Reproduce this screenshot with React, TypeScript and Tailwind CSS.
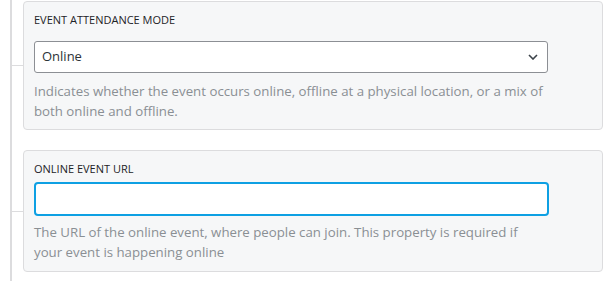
export default function App() {
  return (
    <div className="w-[616px] h-[281px] overflow-hidden bg-white pl-[10px] font-['Open_Sans',sans-serif]">
      <div className="h-full border-l-2 border-[#dcdcde] pt-[1px] flex flex-col gap-[20px]">
        <div className="flex items-center">
          <div className="w-[11px] h-px bg-[#dcdcde]" />
          <section className="w-[580px] rounded-[4px] border border-[#dcdcde] bg-[#f6f7f8] px-[10px] pt-[10px] pb-[8px]">
            <div className="max-w-[514px]">
              <label className="block text-[11px] leading-[16px] font-medium uppercase text-[#1d2327]">
                Event attendance mode
              </label>
              <div className="mt-[13px] flex h-[32px] items-center justify-between rounded-[3px] border border-[#8c8f94] bg-white pl-[7px] pr-[9px] text-[13px] text-[#2c3338]">
                <span>Online</span>
                <svg width="10" height="6" viewBox="0 0 10 6" fill="none">
                  <path d="M1 1l4 4 4-4" stroke="#3c434a" strokeWidth="1.6" />
                </svg>
              </div>
              <p className="mt-[8px] text-[13.25px] leading-[20px] text-[#8a8f94]">
                Indicates whether the event occurs online, offline at a physical location, or a mix of both online and offline.
              </p>
            </div>
          </section>
        </div>
        <div className="flex items-center">
          <div className="w-[11px] h-px bg-[#dcdcde]" />
          <section className="w-[580px] rounded-[4px] border border-[#dcdcde] bg-[#f6f7f8] px-[10px] pt-[10px] pb-[9px]">
            <div className="max-w-[515px]">
              <label className="block text-[11px] leading-[16px] font-medium uppercase text-[#1d2327]">
                Online event URL
              </label>
              <input
                type="text"
                className="mt-[5px] block h-[34px] w-full rounded-[4px] border-2 border-[#0ea0e3] bg-white px-2 text-[14px] outline-none"
              />
              <p className="mt-[6px] text-[13.25px] leading-[20px] text-[#8a8f94]">
                The URL of the online event, where people can join. This property is required if your event is happening online
              </p>
            </div>
          </section>
        </div>
      </div>
    </div>
  );
}
